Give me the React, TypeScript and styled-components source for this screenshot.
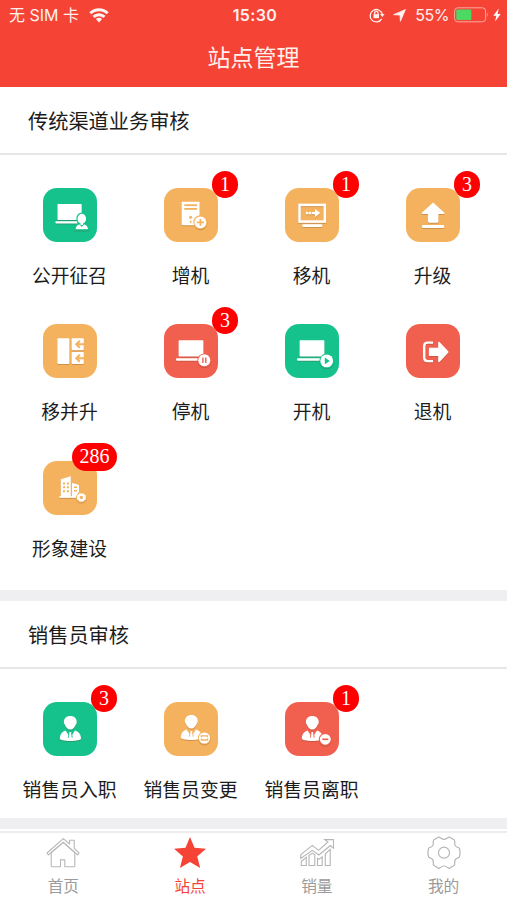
import React from "react";
import styled, { createGlobalStyle } from "styled-components";

const GREEN = "#15c28c";
const ORANGE = "#f4b25e";
const CORAL = "#f1604f";
const RED = "#f54336";

const Global = createGlobalStyle`
  * { box-sizing: border-box; }
  body { margin: 0; background: #fff; }
`;

const Screen = styled.div`
  width: 100%;
  height: 900px;
  overflow: hidden;
  display: flex;
  flex-direction: column;
  background: #fff;
  color: #1c1c1c;
  font-family: "Noto Sans CJK SC", sans-serif;
`;

const Header = styled.header`
  height: 87px;
  flex: none;
  background: ${RED};
  color: #fff0ec;
`;

const StatusBar = styled.div`
  display: grid;
  grid-template-columns: 1fr auto 1fr;
  align-items: center;
  height: 30px;
  padding: 0 6px 0 9px;
  font: 16px/30px Inter, "Noto Sans CJK SC", sans-serif;
`;

const StatusGroup = styled.div<{ $end?: boolean }>`
  display: flex;
  align-items: center;
  justify-content: ${(p) => (p.$end ? "flex-end" : "flex-start")};
  white-space: pre;

  svg { display: block; flex: none; }
`;

const Carrier = styled.span`
  margin-right: 9.5px;
`;

const Percent = styled.span`
  margin: 0 5px 0 9px;
  letter-spacing: -0.5px;
`;

const Clock = styled.span`
  font-weight: 600;
  letter-spacing: 0.4px;
`;

const PageTitle = styled.h1`
  margin: 0;
  font-size: 23px;
  font-weight: 400;
  line-height: 53px;
  text-align: center;
`;

const Section = styled.section<{ $height: number }>`
  height: ${(p) => p.$height}px;
  flex: none;
  border-bottom: 11px solid #efeff1;
`;

const SectionTitle = styled.h2`
  margin: 0;
  height: 68px;
  padding-left: 28px;
  border-bottom: 2px solid #e6e6e7;
  font-size: 20.2px;
  font-weight: 400;
  line-height: 67px;
`;

const Grid = styled.div`
  display: grid;
  grid-template-columns: repeat(4, 121px);
  grid-auto-rows: 136.4px;
  padding: 33px 0 0 9px;
`;

const Item = styled.div`
  display: flex;
  flex-direction: column;
  align-items: center;
`;

const Tile = styled.div<{ $color: string }>`
  position: relative;
  width: 54px;
  height: 54px;
  border-radius: 14px;
  background: ${(p) => p.$color};
  color: ${(p) => p.$color};

  svg { display: block; filter: drop-shadow(0 1px 0.7px rgba(90, 50, 20, 0.25)); }
`;

const Badge = styled.span`
  position: absolute;
  top: -17.4px;
  right: -20.6px;
  min-width: 26.4px;
  height: 27.4px;
  padding: 0 7.5px;
  border-radius: 14px;
  background: #fe0000;
  color: #fff;
  font: 20px/27px "Liberation Serif", serif;
  text-align: center;
`;

const Label = styled.span`
  margin-top: 19px;
  font-size: 18.8px;
  line-height: 28px;
  white-space: nowrap;
`;

const TabBar = styled.nav`
  display: grid;
  grid-template-columns: repeat(4, 1fr);
  height: 69px;
  flex: none;
  margin-top: 2px;
  border-top: 2px solid #ededee;
`;

const Tab = styled.div<{ $active?: boolean }>`
  display: flex;
  flex-direction: column;
  align-items: center;
  padding-top: 3px;
  color: ${(p) => (p.$active ? RED : "#9b9b9b")};
  font-size: 15.7px;
  line-height: 24px;

  svg { display: block; margin-bottom: 4px; }
`;

type TileIcon = () => React.ReactElement;

const Glyph = ({ children }: { children: React.ReactNode }) => (
  <svg width="54" height="54" viewBox="0 0 54 54" fill="#fff">{children}</svg>
);

const Laptop = () => (
  <>
    <rect x="14.6" y="16.2" width="24.8" height="16.4" rx="0.8" />
    <rect x="12" y="34.2" width="24" height="2.6" rx="1" />
  </>
);

const Person = () => (
  <>
    <path d="M27.3 14c4 0 6.6 2.6 6.4 6.2 0 1.4-.5 2-1 2.500-.9 2.400-2.700 4.900-5.400 4.900s-4.500-2.500-5.400-4.900c-.5-.5-1-1.100-1-2.500-.2-3.600 2.400-6.200 6.400-6.200z" />
    <path d="M22.600 28.400c1 1.800 2.200 3.100 3.200 4.600l.7-3h1.600l.7 3c1-1.500 2.200-2.800 3.200-4.600 3.800 1.300 6 3.900 6 8.400 0 1.200-5 2.200-10.700 2.200s-10.400-1-10.400-2.200c0-4.500 2-7.100 5.700-8.400z" />
    <path d="M25.900 31.200l-.5 4.500M28.700 31.200l.5 4.500" stroke="currentColor" strokeWidth="0.900" fill="none" />
  </>
);

const RecruitIcon: TileIcon = () => (
  <Glyph>
    <rect x="14.500" y="16" width="24.200" height="16" rx="0.800" />
    <rect x="12.300" y="33.200" width="22.500" height="2.200" rx="1" />
    <g stroke="currentColor" strokeWidth="1.200">
      <ellipse cx="38.800" cy="30.700" rx="4.900" ry="5.600" />
      <path d="M32 41.800c0-4 2-5.600 4.600-6.200l2.200 2.500 2.200-2.500c2.600.6 4.600 2.200 4.600 6.200z" />
    </g>
    <rect x="37.500" y="34" width="2.600" height="3" />
  </Glyph>
);

const AddMachineIcon: TileIcon = () => (
  <Glyph>
    <rect x="17.600" y="13.700" width="18" height="23.500" rx="0.800" />
    <g fill="currentColor">
      <rect x="20.300" y="16.300" width="12.800" height="1.800" />
      <rect x="20.300" y="20" width="12.800" height="1.800" />
      <circle cx="26.600" cy="29.300" r="1.500" />
      <rect x="25.900" y="32.700" width="1.500" height="2.200" />
      <circle cx="36.400" cy="34.300" r="7" />
    </g>
    <circle cx="36.400" cy="34.300" r="5.900" />
    <path d="M32.700 34.300h7.400M36.400 30.900v6.800" stroke="currentColor" strokeWidth="1.700" />
  </Glyph>
);

const MoveMachineIcon: TileIcon = () => (
  <Glyph>
    <rect x="14.500" y="16.900" width="25.300" height="16.700" fill="none" stroke="#fff" strokeWidth="2.500" />
    <path d="M30 21l5.300 4.100-5.300 4.100v-2.900h-3v-2.400h3z" />
    <rect x="21" y="23.900" width="1.800" height="2.400" />
    <rect x="23.500" y="23.900" width="2.800" height="2.400" />
    <rect x="17.300" y="36.200" width="20" height="2.800" rx="0.800" />
  </Glyph>
);

const UpgradeIcon: TileIcon = () => (
  <Glyph>
    <path d="M27.100 14.600l11.200 10.100c.6.600.3 1.200-.4 1.200h-5.500v7.700c0 .8-.4 1.200-1.200 1.200h-8.100c-.8 0-1.200-.4-1.200-1.200v-7.700h-5.600c-.7 0-1-.6-.4-1.200z" />
    <rect x="16" y="37" width="22.200" height="3" rx="0.900" />
  </Glyph>
);

const MergeIcon: TileIcon = () => (
  <Glyph>
    <rect x="14.400" y="14.300" width="12" height="25.700" rx="1" />
    <rect x="28.600" y="14.300" width="12.200" height="12" rx="1" />
    <rect x="28.600" y="28" width="12.200" height="12" rx="1" />
    <g fill="none" stroke="currentColor" strokeWidth="2">
      <path d="M41 20.300h-7M36.800 16.800l-3.500 3.500 3.500 3.500M41 34.200h-7M36.800 30.700l-3.500 3.500 3.500 3.500" />
    </g>
  </Glyph>
);

const StopIcon: TileIcon = () => (
  <Glyph>
    <Laptop />
    <circle cx="40.300" cy="36.300" r="6.900" fill="currentColor" />
    <circle cx="40.300" cy="36.300" r="6" />
    <path d="M38.900 33.500v5.600M41.800 33.500v5.600" stroke="currentColor" strokeWidth="1.400" />
  </Glyph>
);

const StartIcon: TileIcon = () => (
  <Glyph>
    <Laptop />
    <circle cx="41.700" cy="36.900" r="7.400" fill="currentColor" />
    <circle cx="41.700" cy="36.900" r="6.400" />
    <path d="M39.800 33.600l5 3.300-5 3.300z" fill="currentColor" />
  </Glyph>
);

const ExitIcon: TileIcon = () => (
  <Glyph>
    <path d="M27 18.600h-5.500q-3.300 0-3.300 3.300v11.900q0 3.300 3.300 3.300h5.500" fill="none" stroke="#fff" strokeWidth="2.400" />
    <path d="M22.900 23.800h9.300v-5.200c0-1 .7-1.200 1.300-.6l8.500 9c.6.600.6 1.300 0 1.900l-8.500 9c-.6.600-1.300.4-1.300-.6v-5.200h-9.300z" />
  </Glyph>
);

const BuildingIcon: TileIcon = () => (
  <Glyph>
    <path d="M17.800 18.300l10-3v21h-10zM29 22l5.800 1.400q1.200.3 1.200 1.400v6l-3 5.500h-4z" />
    <rect x="16.300" y="35.200" width="17" height="1.600" />
    <g fill="currentColor">
      <path d="M20 21.400h2v2h-2zM23.900 21.400h2v2h-2zM20 25.300h2v2h-2zM23.900 25.300h2v2h-2zM20 29.200h2v2h-2zM23.900 29.200h2v2h-2zM31 25.600h3v1.500h-3zM31 29h3v1.500h-3z" />
      <circle cx="38.400" cy="36.400" r="5.200" />
    </g>
    <path d="M36.200 32.400h4.400l.6 1.200 1.500.6v4.400l-1.500.6-.6 1.200h-4.400l-.6-1.200-1.500-.6v-4.400l1.500-.6z" />
    <circle cx="38.400" cy="36.400" r="1.600" fill="currentColor" />
  </Glyph>
);

const JoinIcon: TileIcon = () => <Glyph><Person /></Glyph>;

const ChangeIcon: TileIcon = () => (
  <Glyph>
    <g transform="translate(0 -1)"><Person /></g>
    <circle cx="40.400" cy="36" r="6.500" fill="currentColor" />
    <circle cx="40.400" cy="36" r="5.600" />
    <path d="M37.200 35.200v-1.300h6.200v1.300M43.600 36.600V38h-6.200v-1.400" fill="none" stroke="currentColor" strokeWidth="1.300" />
  </Glyph>
);

const LeaveIcon: TileIcon = () => (
  <Glyph>
    <Person />
    <circle cx="40.300" cy="37.300" r="6.500" fill="currentColor" />
    <circle cx="40.300" cy="37.300" r="5.400" />
    <path d="M37.300 37.300h6" stroke="currentColor" strokeWidth="1.700" />
  </Glyph>
);

const WifiIcon = () => (
  <svg width="20" height="15" viewBox="0 0 20 15" fill="none" stroke="#fff4f1" strokeWidth="2.900">
    <path d="M1.300 5.200a12.500 12.500 0 0 1 17.400 0M4.500 8.900a8 8 0 0 1 11 0" />
    <path d="M10 14.400l-3.100-3.300a4.500 4.500 0 0 1 6.200 0z" fill="#fff4f1" stroke="none" />
  </svg>
);

const LockIcon = () => (
  <svg width="16" height="16" viewBox="0 0 16 16" fill="none" stroke="#fff0ec" strokeWidth="1.300">
    <path d="M12.700 11.900A6.200 6.200 0 1 1 13.300 7" />
    <path d="M11 7h4.600l-2.300 2.900z" fill="#fff0ec" stroke="none" />
    <rect x="4.500" y="7.200" width="5.500" height="4" fill="#fff0ec" stroke="none" />
    <path d="M5.600 7.500V6a1.700 1.700 0 0 1 3.400 0v1.500" />
  </svg>
);

const LocationIcon = () => (
  <svg width="13" height="13" viewBox="0 0 13 13" fill="#fff4f1" stroke="#fff4f1" strokeWidth="0.800" strokeLinejoin="round">
    <path d="M12.400.6L7.400 12.300 7 6 .6 5.700z" />
  </svg>
);

const BatteryIcon = () => (
  <svg width="36" height="16" viewBox="0 0 36 16">
    <rect x="0.600" y="0.800" width="31" height="14" rx="3.200" fill="none" stroke="#fba99f" />
    <rect x="2.300" y="2.600" width="15" height="10.400" rx="1" fill="#4bd964" />
    <path d="M33.200 5.500q1.600 2.300 0 4.600z" fill="#fba99f" />
  </svg>
);

const BoltIcon = () => (
  <svg width="11" height="14" viewBox="-3 0 11 14" fill="#fff">
    <path d="M5.700.6L.3 7.700h3L2.100 13.400 7.700 5.900H4.600z" />
  </svg>
);

const HomeIcon = () => (
  <svg width="34" height="34" viewBox="0 0 34 34" fill="none" stroke="#b8b8b8" strokeWidth="1.100" strokeLinejoin="round">
    <path d="M1 17L17.300 2.600 23.600 8V4.300h4.600v7.900L33 17l-1.300 2-14.400-12.600L2.300 19z" />
    <path d="M5.200 16.700v13q0 1 1 1h8.300v-6.800h4.300v6.800h9q1 0 1-1v-13M5.200 16.700L17.300 6.400l11.500 10.300" />
  </svg>
);

const StarIcon = () => (
  <svg width="34" height="34" viewBox="0 0 34 34" fill={RED}>
    <path d="M17 1l4.500 10.800 11.500.9-8.800 7.900 3 11.300L17 26.100 6.900 31.900l3-11.300L1.100 12.700l11.400-.9z" />
  </svg>
);

const SalesIcon = () => (
  <svg width="34" height="34" viewBox="0 0 34 34" fill="none" stroke="#b5b5b5" strokeWidth="1.100">
    <path d="M.8 18.600L12.300 9.400l6.300 5L27.900 6l-3.200-2.400H33.500v8.500l-3.100-2.600L18.900 19l-6.600-4.600L.8 22.500z" />
    <path d="M1.300 29.500v-4.300l5-3.900v8.200zM9 29.500V19.400l3.300-2.300 2.500 1.800v10.600zM17.500 29.500v-7.200l1.700.8 3-2.300v8.700zM25.300 29.500V17.800l4.900-4.400v16.100z" />
  </svg>
);

const GearIcon = () => (
  <svg width="34" height="34" viewBox="0 0 34 34" fill="none" stroke="#b5b5b5" strokeWidth="1.200" strokeLinejoin="round">
    <path d="M11.200 1.300Q12.300.8 13.300 1.800Q17 5 20.700 1.800Q21.700.8 22.800 1.300L27.300 4.100Q28.100 4.800 27.700 6.100Q27.100 10.600 31.300 11.500Q32.500 12 32.700 13.200Q33.300 16.700 32.700 20.200Q32.500 21.400 31.300 21.900Q27.100 22.800 27.700 27.300Q28.100 28.600 27.300 29.300L22.800 32.100Q21.700 32.600 20.700 31.600Q17 28.400 13.300 31.600Q12.300 32.600 11.200 32.100L6.700 29.300Q5.900 28.600 6.300 27.300Q6.900 22.800 2.700 21.900Q1.500 21.400 1.300 20.200Q.7 16.700 1.300 13.200Q1.500 12 2.700 11.500Q6.900 10.600 6.300 6.100Q5.900 4.800 6.700 4.100Z" />
    <circle cx="17" cy="16.700" r="5.500" />
  </svg>
);

interface Entry {
  label: string;
  color: string;
  icon: TileIcon;
  count?: number;
}

const channelEntries: Entry[] = [
  { label: "公开征召", color: GREEN, icon: RecruitIcon },
  { label: "增机", color: ORANGE, icon: AddMachineIcon, count: 1 },
  { label: "移机", color: ORANGE, icon: MoveMachineIcon, count: 1 },
  { label: "升级", color: ORANGE, icon: UpgradeIcon, count: 3 },
  { label: "移并升", color: ORANGE, icon: MergeIcon },
  { label: "停机", color: CORAL, icon: StopIcon, count: 3 },
  { label: "开机", color: GREEN, icon: StartIcon },
  { label: "退机", color: CORAL, icon: ExitIcon },
  { label: "形象建设", color: ORANGE, icon: BuildingIcon, count: 286 },
];

const staffEntries: Entry[] = [
  { label: "销售员入职", color: GREEN, icon: JoinIcon, count: 3 },
  { label: "销售员变更", color: ORANGE, icon: ChangeIcon },
  { label: "销售员离职", color: CORAL, icon: LeaveIcon, count: 1 },
];

const EntryGrid = ({ entries }: { entries: Entry[] }) => (
  <Grid>
    {entries.map(({ label, color, icon: Icon, count }) => (
      <Item key={label}>
        <Tile $color={color}>
          <Icon />
          {count !== undefined && <Badge>{count}</Badge>}
        </Tile>
        <Label>{label}</Label>
      </Item>
    ))}
  </Grid>
);

const Indicators = styled.div`
  display: flex;
  gap: 8px;
  align-items: center;
`;

export default function App() {
  return (
    <Screen>
      <Global />
      <Header>
        <StatusBar>
          <StatusGroup>
            <Carrier>无 SIM 卡</Carrier>
            <WifiIcon />
          </StatusGroup>
          <Clock>15:30</Clock>
          <StatusGroup $end>
            <Indicators>
              <LockIcon />
              <LocationIcon />
            </Indicators>
            <Percent>55%</Percent>
            <BatteryIcon />
            <BoltIcon />
          </StatusGroup>
        </StatusBar>
        <PageTitle>站点管理</PageTitle>
      </Header>
      <Section $height={514}>
        <SectionTitle>传统渠道业务审核</SectionTitle>
        <EntryGrid entries={channelEntries} />
      </Section>
      <Section $height={228}>
        <SectionTitle>销售员审核</SectionTitle>
        <EntryGrid entries={staffEntries} />
      </Section>
      <TabBar>
        <Tab><HomeIcon />首页</Tab>
        <Tab $active><StarIcon />站点</Tab>
        <Tab><SalesIcon />销量</Tab>
        <Tab><GearIcon />我的</Tab>
      </TabBar>
    </Screen>
  );
}
